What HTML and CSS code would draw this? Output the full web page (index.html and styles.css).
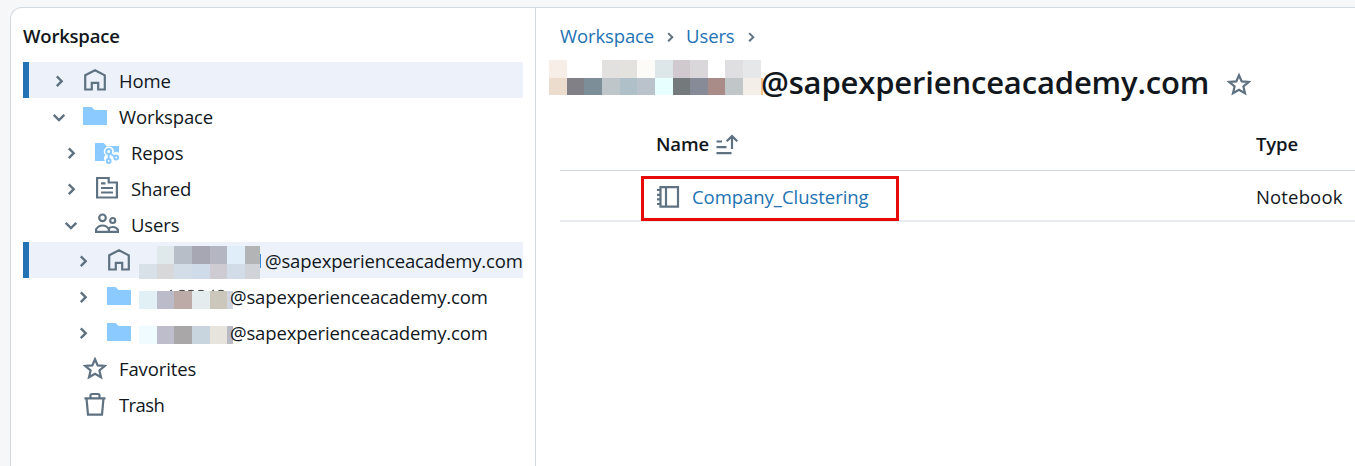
FILE: index.html
```html
<!DOCTYPE html>
<html lang="en">
<head>
<meta charset="utf-8">
<title>Workspace</title>
<link rel="stylesheet" href="styles.css">
</head>
<body>
<svg class="defs" width="0" height="0">
  <symbol id="right" viewBox="0 0 24 24"><path d="M9.800 7.300l4.900 4.900-4.900 4.900" fill="none" stroke="currentColor" stroke-width="2.400"/></symbol>
  <symbol id="down" viewBox="0 0 24 24"><path d="M6.700 9.800l5.300 5.300 5.300-5.300" fill="none" stroke="currentColor" stroke-width="2.400"/></symbol>
  <symbol id="home" viewBox="0 0 24 24"><path d="M2.200 7.300 12 2.300l9.800 5v14.200H15.200v-6.700H8.800v6.700H2.200z" fill="none" stroke="currentColor" stroke-width="2.200"/></symbol>
  <symbol id="folder" viewBox="0 0 24 24"><path d="M0 3.500Q0 3 .5 3H8.700L11.500 6H23.500q.5 0 .5.500V20.500q0 .5-.5.500H.5Q0 21 0 20.500z" fill="#8acaff"/></symbol>
  <symbol id="repo" viewBox="0 0 24 24"><path d="M0 3.500Q0 3 .5 3H8.700L11.500 6H24V12.700a4.500 4.500 0 0 0-5.500.5 5 5 0 1 0-8 1.800 4.500 4.500 0 0 0-.5 6H0z" fill="#8acaff"/><g fill="none" stroke="#8acaff" stroke-width="2"><circle cx="13.700" cy="11.500" r="2.500"/><circle cx="13.700" cy="21" r="1.900"/><circle cx="21.200" cy="17.500" r="1.900"/><path d="M13.700 14v5M15.300 13.500l4.200 3"/></g></symbol>
  <symbol id="doc" viewBox="0 0 24 24"><g fill="none" stroke="currentColor" stroke-width="2.200"><path d="M2.100 2H13.700V6.500H21.900V21.500H2.100z"/><path d="M6 7.300h4.500M6 12h12M6 16.500h12"/></g></symbol>
  <symbol id="users" viewBox="0 0 24 24"><g fill="none" stroke="currentColor" stroke-width="2.200"><circle cx="7.500" cy="5.800" r="3.300"/><circle cx="17.700" cy="8.500" r="2.500"/><path d="M1.100 19.900V17.300Q3.500 13.500 7.500 13.500t6.500 3.800V19.900zM14 19.900h8.900V17.800Q21 15 17.700 15q-2.300 0-4 1.300"/></g></symbol>
  <symbol id="star" viewBox="0 0 24 24"><path d="M12 3.200l2.700 6.200 6.900.6-5.200 4.500 1.600 6.800-6-3.600-6 3.600 1.600-6.800L2.400 10l6.900-.6z" fill="none" stroke="currentColor" stroke-width="2.200"/></symbol>
  <symbol id="trash" viewBox="0 0 24 24"><path d="M1.500 6.300h21M3.500 6.300l1.500 16.300h14l1.500-16.300M7.500 6V3.500Q7.500 2 9 2h6q1.500 0 1.500 1.500V6" fill="none" stroke="currentColor" stroke-width="2.200"/></symbol>
  <symbol id="sort" viewBox="0 0 24 24"><path d="M1.500 9.500h5.500M1.500 15.200h10M1.500 21.200H16.500M17 17V4.500M11.700 9.300l5.300-5.200 5.300 5.200" fill="none" stroke="currentColor" stroke-width="2.200"/></symbol>
  <symbol id="notebook" viewBox="0 0 24 24"><g fill="none" stroke="currentColor" stroke-width="2.200"><path d="M4.500 2.100H22V21.600H4.500zM10 2.100v19.500M1 5h3.500M1 9.800h3.500M1 14.400h3.500M1 19h3.500"/></g></symbol>
</svg>
<div class="app">
  <aside class="sidebar">
    <h2 class="heading">Workspace</h2>
    <ul class="tree">
      <li class="row selected"><svg class="icon"><use href="#right"/></svg><svg class="icon"><use href="#home"/></svg><span class="label">Home</span></li>
      <li class="row"><svg class="icon"><use href="#down"/></svg><svg class="icon"><use href="#folder"/></svg><span class="label">Workspace</span></li>
      <li class="row level-2"><svg class="icon"><use href="#right"/></svg><svg class="icon"><use href="#repo"/></svg><span class="label">Repos</span></li>
      <li class="row level-2"><svg class="icon"><use href="#right"/></svg><svg class="icon"><use href="#doc"/></svg><span class="label">Shared</span></li>
      <li class="row level-2"><svg class="icon"><use href="#down"/></svg><svg class="icon"><use href="#users"/></svg><span class="label">Users</span></li>
      <li class="row level-3 selected"><svg class="icon"><use href="#right"/></svg><svg class="icon"><use href="#home"/></svg>
        <svg class="mask mask-first" width="126" height="36" shape-rendering="crispEdges"><path fill="#dfe8ea" d="M18 4h17v18H18z"/><path fill="#b7bec8" d="M35 4h18v18H35z"/><path fill="#a7a7b3" d="M53 4h18v18H53z"/><path fill="#b4b6c1" d="M71 4h17v18H71z"/><path fill="#dfeef8" d="M88 4h18v18H88z"/><path fill="#b3b4b6" d="M106 4h15v18h-15z"/><path fill="#d9e1e8" d="M0 22h18v15H0z"/><path fill="#d8d8da" d="M18 22h17v15H18z"/><path fill="#d2dde7" d="M35 22h18v15H35z"/><path fill="#d0dbe9" d="M53 22h18v15H53z"/><path fill="#cecbd2" d="M71 22h17v15H71z"/><path fill="#d1dce8" d="M88 22h18v15H88z"/><path fill="#d0d3d8" d="M106 22h15v15h-15z"/><path fill="#3a8ddd" d="M121 12h1v14h-1z"/></svg>
        <span class="label mail">@sapexperienceacademy.com</span></li>
      <li class="row level-3"><svg class="icon"><use href="#right"/></svg><svg class="icon"><use href="#folder"/></svg>
        <svg class="mask" width="91" height="36"><path d="M31 13l2-1M40 13q3-1.500 6 0M49 13q3-1.500 6 0M59 13q3-1.500 6 0M73 13l2-1M79 13q3-1.500 6 0" fill="none" stroke="#34393d"/><path fill="#e1f0f4" d="M0 13h18v18H0z"/><path fill="#bcbbca" d="M18 13h17v18H18z"/><path fill="#bdaba7" d="M35 13h18v18H35z"/><path fill="#e4ecee" d="M53 13h18v18H53z"/><path fill="#cbc7ba" d="M71 13h17v18H71z"/><path fill="#d1d5df" d="M88 13h6v18h-6z"/></svg>
        <span class="label mail">@sapexperienceacademy.com</span></li>
      <li class="row level-3"><svg class="icon"><use href="#right"/></svg><svg class="icon"><use href="#folder"/></svg>
        <svg class="mask" width="91" height="36"><path fill="#f0fbff" d="M0 12h18v18H0z"/><path fill="#bebdcc" d="M18 12h17v18H18z"/><path fill="#aaa7a8" d="M35 12h18v18H35z"/><path fill="#c8d5df" d="M53 12h18v18H53z"/><path fill="#e7e4de" d="M71 12h17v18H71z"/><path fill="#b9bac3" d="M88 12h6v18h-6z"/></svg>
        <span class="label mail">@sapexperienceacademy.com</span></li>
      <li class="row leaf"><svg class="icon"><use href="#star"/></svg><span class="label">Favorites</span></li>
      <li class="row leaf"><svg class="icon"><use href="#trash"/></svg><span class="label trash">Trash</span></li>
    </ul>
  </aside>
  <main class="content">
    <nav class="crumbs"><a>Workspace</a><svg class="crumb-sep"><use href="#right"/></svg><a>Users</a><svg class="crumb-sep"><use href="#right"/></svg></nav>
    <div class="title-row">
      <svg class="title-mask" width="214" height="36" shape-rendering="crispEdges"><path fill="#f7eee8" d="M0 0h18v18H0z"/><path fill="#e2e1e0" d="M53 0h18v18H53z"/><path fill="#e3e2de" d="M71 0h17v18H71z"/><path fill="#fcfbf7" d="M88 0h18v18H88z"/><path fill="#dde6e8" d="M106 0h18v18h-18z"/><path fill="#d0cace" d="M124 0h17v18h-17z"/><path fill="#d9d7da" d="M141 0h18v18h-18z"/><path fill="#dfdfe1" d="M176 0h18v18h-18z"/><path fill="#e6e7e9" d="M194 0h18v18h-18z"/><path fill="#ecdccd" d="M0 18h18v17H0z"/><path fill="#828087" d="M18 18h17v17H18z"/><path fill="#7c8e98" d="M35 18h18v17H35z"/><path fill="#bfc6c9" d="M53 18h18v17H53z"/><path fill="#afc0c9" d="M71 18h17v17H71z"/><path fill="#bac3cc" d="M88 18h18v17H88z"/><path fill="#e7fffe" d="M106 18h18v17h-18z"/><path fill="#747a7c" d="M124 18h17v17h-17z"/><path fill="#878b97" d="M141 18h18v17h-18z"/><path fill="#a98b87" d="M159 18h17v17h-17z"/><path fill="#c1c6c9" d="M176 18h18v17h-18z"/><path fill="#f4eee8" d="M194 18h18v17h-18z"/><path fill="#fac38c" d="M212 18h2v17h-2z"/></svg>
      <h1 class="title">@sapexperienceacademy.com</h1>
      <svg class="icon title-star"><use href="#star"/></svg>
    </div>
    <div class="table">
      <div class="tr th"><span class="cell name-head"><b>Name</b><svg class="icon"><use href="#sort"/></svg></span><b class="cell">Type</b></div>
      <div class="tr td"><span class="cell file"><svg class="icon"><use href="#notebook"/></svg><a>Company_Clustering</a></span><span class="cell book">Notebook</span></div>
    </div>
  </main>
</div>
</body>
</html>
```
FILE: styles.css
```css
* { box-sizing: border-box; }
body { margin: 0; height: 466px; overflow: hidden; background: #f6f7f9; color: #11171c; font: 18.5px/36px "Open Sans", "Noto Sans", sans-serif; letter-spacing: -0.12px; }
.defs { display: block; }
svg { flex: none; display: block; }
.app { display: flex; height: 480px; margin: 7px 0 0 10px; border: 1px solid #d1d9e1; border-right: 0; border-top-left-radius: 12px; background: #fff; width: 1345px; overflow: hidden; }
.sidebar { width: 525px; flex: none; border-right: 1px solid #d1d9e1; padding: 10px 12px 0; }
.heading { margin: 0; height: 44px; font-size: 18.5px; line-height: 36px; font-weight: 600; letter-spacing: -0.2px; }
.tree { list-style: none; margin: 0; padding: 0; }
.row { display: flex; align-items: center; height: 36px; padding-left: 24px; white-space: nowrap; }
.selected { background: #edf2fa; box-shadow: inset 6px 0 #2272b4; }
.level-2 { padding-left: 36px; }
.level-3 { padding-left: 48px; }
.leaf { padding-left: 60px; }
.label { padding-top: 2px; }
.trash { letter-spacing: -0.6px; }
.icon { width: 24px; height: 24px; color: #5f7281; margin-right: 12px; margin-top: -1px; }
.row > .icon:first-child { margin-top: 1px; }
.leaf > .icon:first-child { margin-top: -1px; }
.level-3 > .icon + .mask { margin-left: -4px; overflow: visible; }
.mail { letter-spacing: -0.15px; }
.content { flex: 1; min-width: 0; padding: 10px 0 0; }
.crumbs { display: flex; align-items: center; height: 36px; padding-left: 24px; }
a { color: #2272b4; }
.crumb-sep { width: 20px; height: 20px; color: #5f7281; margin: 2px 6px 0; }
.title-row { display: flex; align-items: flex-start; height: 64px; padding: 6px 0 0 13px; }
.title-mask { width: 214px; }
.title { margin: 3px 0 0 -2px; font-size: 31px; line-height: 38px; font-weight: 600; letter-spacing: -0.16px; white-space: nowrap; }
.title-star { margin: 12px 0 0 18px; }
.table { margin-left: 24px; }
.tr { display: grid; grid-template-columns: 696px 1fr; align-items: center; }
.th { height: 53px; border-bottom: 1px solid #d1d9e1; }
.th b { font-weight: 600; }
.td { height: 51px; border-bottom: 2px solid #e8ebef; }
.cell { display: flex; align-items: center; }
.name-head { padding-left: 96px; gap: 6px; }
.file { position: relative; justify-self: start; width: 258px; height: 45px; margin: 5px 0 -1px 81px; padding: 0 0 3px 12px; border: 3px solid #e80909; letter-spacing: -0.04px; }
.book { padding-top: 3px; letter-spacing: 0.15px; }
```
